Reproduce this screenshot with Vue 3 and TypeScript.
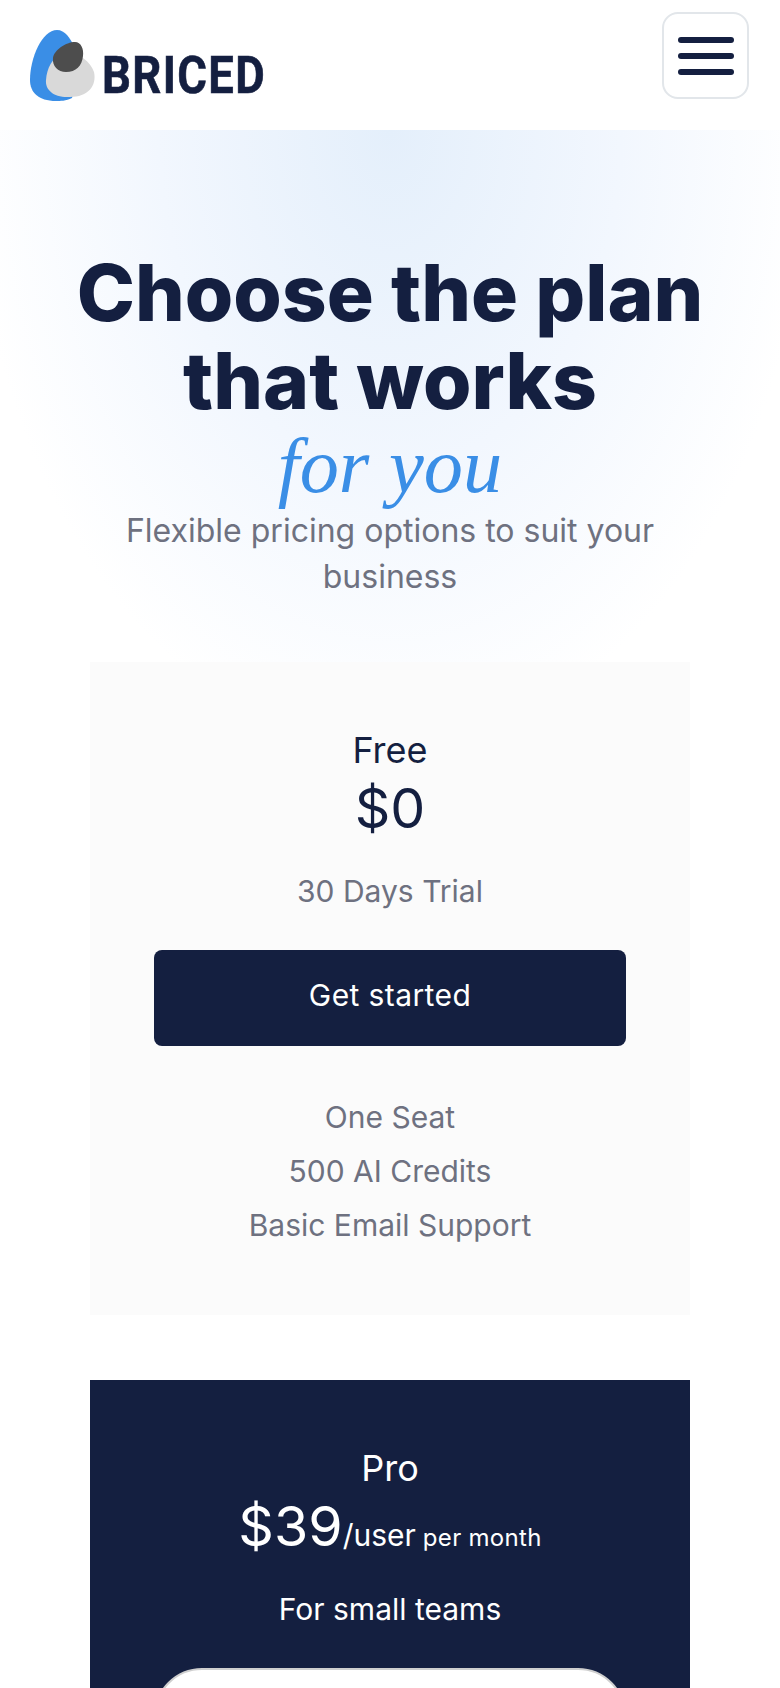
<script setup lang="ts">
interface Plan {
  name: string;
  price: string;
  unit?: string;
  period?: string;
  blurb: string;
  features: string[];
  dark?: boolean;
}

const plans: Plan[] = [
  {
    name: "Free",
    price: "$0",
    blurb: "30 Days Trial",
    features: ["One Seat", "500 AI Credits", "Basic Email Support"],
  },
  {
    name: "Pro",
    price: "$39",
    unit: "/user",
    period: " per month",
    blurb: "For small teams",
    features: ["Unlimited Seats", "5000 AI Credits", "Priority Support"],
    dark: true,
  },
];
</script>

<template>
  <div class="page">
    <header class="topbar">
      <a class="logo" href="#">
        <svg class="logo-mark" width="68" height="71" viewBox="0 0 68 71" aria-hidden="true">
          <path d="M27 0C35 0 40 8 44 16L50 40L42 68C36 71 30 71 26 71C8 71 0 62 0 50C0 28 12 0 27 0Z" fill="#3a8ee6" />
          <path d="M32 24C45 20 60 30 64 42C67 56 58 67 40 67C24 68 15 60 16 50C17 38 22 28 32 24Z" fill="#d9d9d9" />
          <path d="M45 12C51 12 54 19 53 26C52 36 46 42 36 42C28 42 22 36 23 28C24 20 36 12 45 12Z" fill="#4d4d4d" />
        </svg>
        <span class="logo-word">BRICED</span>
      </a>
      <button class="menu" type="button" aria-label="Menu">
        <span class="menu-bar"></span>
        <span class="menu-bar"></span>
        <span class="menu-bar"></span>
      </button>
    </header>

    <section class="hero">
      <h1 class="title">
        Choose the plan<br />that works<br /><em class="accent">for you</em>
      </h1>
      <p class="sub">Flexible pricing options to suit your business</p>
    </section>

    <section class="plans">
      <article
        v-for="plan in plans"
        :key="plan.name"
        class="plan"
        :class="{ 'plan-dark': plan.dark }"
      >
        <h2 class="plan-name">{{ plan.name }}</h2>
        <div class="plan-price">
          {{ plan.price }}<span v-if="plan.unit" class="plan-unit">{{ plan.unit }}</span><span v-if="plan.period" class="plan-period">{{ plan.period }}</span>
        </div>
        <p class="plan-blurb">{{ plan.blurb }}</p>
        <a class="plan-cta" href="#">Get started</a>
        <ul class="plan-features">
          <li v-for="item in plan.features" :key="item">{{ item }}</li>
        </ul>
      </article>
    </section>
  </div>
</template>

<style>
html,
body {
  margin: 0;
  background: #fff;
}
</style>

<style scoped>
.page {
  width: 780px;
  height: 1688px;
  overflow: hidden;
  background: #fff;
  font-family: Inter, "Liberation Sans", sans-serif;
  color: #141f40;
}

.topbar {
  height: 130px;
  box-sizing: border-box;
  display: flex;
  align-items: center;
  justify-content: space-between;
  padding: 0 31px 0 30px;
}

.logo {
  display: flex;
  align-items: flex-end;
  gap: 4px;
  margin-top: 1px;
  text-decoration: none;
}

.logo-mark {
  display: block;
}

.logo-word {
  font-family: Roboto, sans-serif;
  font-weight: 700;
  font-size: 51px;
  line-height: 38px;
  height: 38px;
  margin-bottom: 6px;
  letter-spacing: 1.5px;
  -webkit-text-stroke: 0.6px #141f40;
  color: #141f40;
  transform: scaleX(0.89);
  transform-origin: left center;
}

.menu {
  width: 87px;
  height: 87px;
  box-sizing: border-box;
  padding: 0;
  background: #fff;
  border: 2px solid #e2e6ea;
  border-radius: 16px;
  display: flex;
  flex-direction: column;
  align-items: center;
  justify-content: center;
  gap: 10px;
  margin-top: -19px;
}

.menu-bar {
  width: 56px;
  height: 6px;
  border-radius: 3px;
  background: #141f40;
}

.hero {
  box-sizing: border-box;
  height: 532px;
  padding: 119px 30px 0;
  text-align: center;
  background: radial-gradient(ellipse 420px 620px at 390px 0, #e4effb 0%, #f2f7fe 55%, #ffffff 100%);
}

.title {
  margin: 0;
  font-size: 78.4px;
  line-height: 88px;
  font-weight: 800;
  color: #141f40;
}

.accent {
  display: block;
  line-height: 82px;
  font-family: "Liberation Serif", serif;
  font-style: italic;
  font-weight: 400;
  color: #3a8ee6;
}

.sub {
  margin: 1px 0 0;
  padding: 0 40px;
  font-size: 32px;
  line-height: 46px;
  color: #6e7180;
}

.plans {
  display: flex;
  flex-direction: column;
  gap: 65px;
  padding: 0 90px;
}

.plan {
  height: 653px;
  box-sizing: border-box;
  padding: 64px 64px 0;
  text-align: center;
  background: #fbfbfb;
}

.plan-dark {
  background: #141f40;
  color: #fff;
}

.plan-name {
  margin: 0;
  font-size: 36px;
  line-height: 48px;
  font-weight: 400;
}

.plan-price {
  height: 68px;
  font-size: 55.5px;
  line-height: 68px;
  white-space: pre-wrap;
}

.plan-unit {
  font-size: 30px;
}

.plan-period {
  font-size: 24px;
  letter-spacing: 0.3px;
}

.plan-blurb {
  margin: 27px 0 37px;
  font-size: 30px;
  line-height: 44px;
  color: #6e7180;
}

.plan-dark .plan-blurb {
  color: #fff;
}

.plan-cta {
  display: block;
  height: 96px;
  line-height: 90px;
  border-radius: 8px;
  background: #141f40;
  color: #fff;
  font-size: 30px;
  letter-spacing: 0.4px;
  text-decoration: none;
}

.plan-dark .plan-cta {
  box-sizing: border-box;
  border: 2px solid #cfcfcf;
  border-radius: 48px;
  background: #fff;
  color: #141f40;
}

.plan-features {
  list-style: none;
  margin: 44px 0 0;
  padding: 0;
  font-size: 30px;
  line-height: 54px;
  color: #6e7180;
}

.plan-dark .plan-features {
  color: #fff;
}
</style>
